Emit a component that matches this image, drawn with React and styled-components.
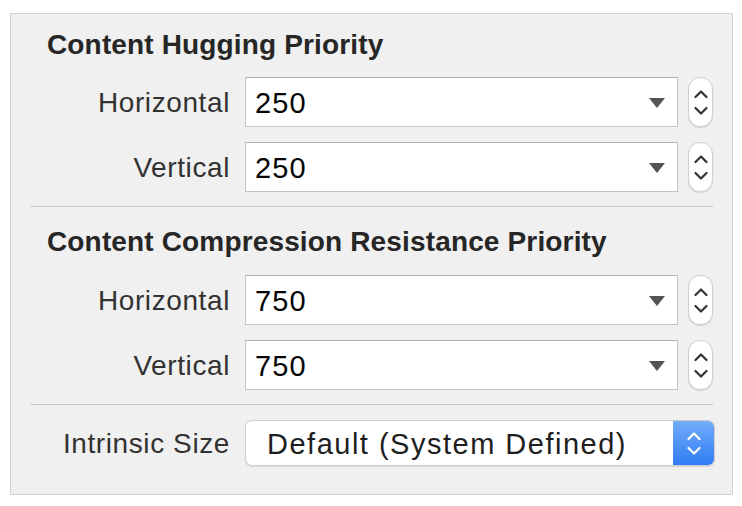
import React from 'react'
import styled, {createGlobalStyle} from 'styled-components'

const Global = createGlobalStyle`
    body {
        margin: 0;
        background: #ffffff;
        font-family: "Liberation Sans", Arial, sans-serif;
    }
`;

const Panel = styled.div`
    margin: 13px 9px 0 10px;
    width: 723px;
    height: 482px;
    box-sizing: border-box;
    background: #f0f0f0;
    border: 1px solid #d2d2d2;
    padding: 15px 19px 0 19px;
    display: flex;
    flex-direction: column;
`;

const Title = styled.div`
    font-size: 28px;
    line-height: 32px;
    font-weight: bold;
    color: #262626;
    letter-spacing: 0.15px;
    padding-left: 17px;
    margin-bottom: ${props => props.gap}px;
`;

const Rows = styled.div`
    display: flex;
    flex-direction: column;
    gap: 15px;
`;

const Row = styled.div`
    display: grid;
    grid-template-columns: 200px 1fr 25px;
    align-items: center;
    height: 50px;
`;

const Label = styled.div`
    text-align: right;
    font-size: 28px;
    letter-spacing: 0.6px;
    color: #323232;
    padding-top: 1px;
`;

const Field = styled.div`
    height: 50px;
    margin: 0 10px 0 15px;
    box-sizing: border-box;
    background: #ffffff;
    border: 1px solid #c4c4c4;
    border-top-color: #b4b4b4;
    display: flex;
    align-items: center;
    padding: 2px 12px 0 9px;
`;

const Value = styled.span`
    flex: 1;
    font-size: 29px;
    letter-spacing: 1.1px;
    color: #050505;
`;

const Caret = styled.span`
    width: 0;
    height: 0;
    border-left: 8px solid transparent;
    border-right: 8px solid transparent;
    border-top: 10px solid #545454;
`;

const Stepper = styled.div`
    width: 25px;
    height: 50px;
    box-sizing: border-box;
    background: #ffffff;
    border: 1px solid #cfcfcf;
    border-radius: 12px;
    box-shadow: 0 1px 1px rgba(0, 0, 0, 0.12);
    display: flex;
    align-items: center;
    justify-content: center;
`;

const Divider = styled.div`
    height: 1px;
    background: #c9c9c9;
    margin: ${props => props.top}px 0 ${props => props.bottom}px 0;
`;

const PopupRow = styled.div`
    display: grid;
    grid-template-columns: 200px 1fr;
    align-items: center;
    height: 46px;
    margin-right: -2px;
`;

const Popup = styled.div`
    height: 46px;
    margin-left: 15px;
    box-sizing: border-box;
    background: #ffffff;
    border: 1px solid #cdcdcd;
    border-radius: 7px;
    box-shadow: 0 1px 1px rgba(0, 0, 0, 0.1);
    display: flex;
    align-items: stretch;
    overflow: hidden;
`;

const PopupText = styled.span`
    flex: 1;
    display: flex;
    align-items: center;
    padding: 2px 0 0 21px;
    font-size: 29px;
    letter-spacing: 1.5px;
    color: #1e1e1e;
`;

const PopupButton = styled.span`
    width: 41px;
    background: linear-gradient(#74acf8, #2f7cf6);
    display: flex;
    align-items: center;
    justify-content: center;
`;

const Chevrons = ({color, width, gap}) => (
    <svg width="14" height={18 + gap} viewBox={`0 0 14 ${18 + gap}`}>
        <path d="M1.5 7 L7 1.5 L12.5 7" fill="none" stroke={color} strokeWidth={width} strokeLinecap="round" strokeLinejoin="round" />
        <path d={`M1.5 ${11 + gap} L7 ${16.5 + gap} L12.5 ${11 + gap}`} fill="none" stroke={color} strokeWidth={width} strokeLinecap="round" strokeLinejoin="round" />
    </svg>
);

const PriorityRow = ({label, value}) => (
    <Row>
        <Label>{label}</Label>
        <Field>
            <Value>{value}</Value>
            <Caret />
        </Field>
        <Stepper>
            <Chevrons color="#333333" width={2.2} gap={7} />
        </Stepper>
    </Row>
);

function App() {
    return (
        <>
            <Global />
            <Panel>
                <Title gap={16}>Content Hugging Priority</Title>
                <Rows>
                    <PriorityRow label="Horizontal" value="250" />
                    <PriorityRow label="Vertical" value="250" />
                </Rows>

                <Divider top={14} bottom={19} />

                <Title gap={17}>Content Compression Resistance Priority</Title>
                <Rows>
                    <PriorityRow label="Horizontal" value="750" />
                    <PriorityRow label="Vertical" value="750" />
                </Rows>

                <Divider top={14} bottom={15} />

                <PopupRow>
                    <Label>Intrinsic Size</Label>
                    <Popup>
                        <PopupText>Default (System Defined)</PopupText>
                        <PopupButton>
                            <Chevrons color="#ffffff" width={2.2} gap={5} />
                        </PopupButton>
                    </Popup>
                </PopupRow>
            </Panel>
        </>
    )
}

export default App;
